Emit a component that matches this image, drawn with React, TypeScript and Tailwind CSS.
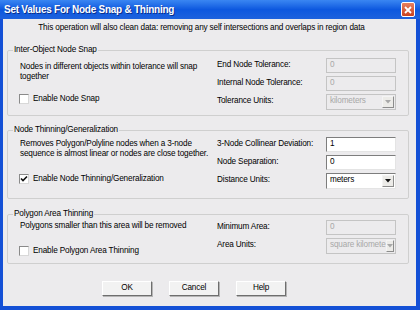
import React from "react";

const font = { fontFamily: '"Liberation Sans", Arial, sans-serif' };

function Checkbox({ checked }: { checked?: boolean }) {
  return (
    <div className="w-[10px] h-[10px] bg-white border border-t-[#8a8a8a] border-l-[#8a8a8a] border-r-[#d8d8d8] border-b-[#d8d8d8] flex items-center justify-center shrink-0">
      {checked && (
        <svg width="8" height="8" viewBox="0 0 8 8">
          <path d="M1 3.5 L3 5.5 L7 1.5" stroke="#111" strokeWidth="1.6" fill="none" />
        </svg>
      )}
    </div>
  );
}

function Input({ value, disabled }: { value: string; disabled?: boolean }) {
  return (
    <div
      className={
        "w-[70px] h-[15px] flex items-center pl-[3px] border " +
        (disabled
          ? "bg-[#ecebed] border-[#c4c4c4] text-[#a8a8a8]"
          : "bg-white border-t-[#7d7d7d] border-l-[#7d7d7d] border-r-[#e4e4e4] border-b-[#e4e4e4] text-black")
      }
    >
      {value}
    </div>
  );
}

function Select({ value, disabled }: { value: string; disabled?: boolean }) {
  return (
    <div
      className={
        "w-[70px] h-[16px] flex items-center border " +
        (disabled
          ? "bg-[#ecebed] border-[#c4c4c4] text-[#a8a8a8]"
          : "bg-white border-t-[#7d7d7d] border-l-[#7d7d7d] border-r-[#e4e4e4] border-b-[#e4e4e4] text-black")
      }
    >
      <div className="flex-1 pl-[3px] whitespace-nowrap">{value}</div>
      <div className="w-[12px] h-[12px] mr-[1px] flex items-center justify-center bg-[#ecebe8] border border-t-[#f4f4f4] border-l-[#f4f4f4] border-r-[#8c8c8c] border-b-[#8c8c8c]">
        <svg width="6" height="4" viewBox="0 0 6 4">
          <path d="M0 0 L6 0 L3 3.5 Z" fill={disabled ? "#a8a8a8" : "#111"} />
        </svg>
      </div>
    </div>
  );
}

function Row({ label, children }: { label: string; children: React.ReactNode }) {
  return (
    <div className="flex items-center h-[15px]">
      <div className="w-[109px]">{label}</div>
      {children}
    </div>
  );
}

function Button({ label }: { label: string }) {
  return (
    <div className="w-[50px] h-[15px] flex items-center justify-center bg-[#f2f2f2] border border-t-[#ffffff] border-l-[#ffffff] border-r-[#6e6e6e] border-b-[#6e6e6e] shadow-[1px_1px_0_#b5b5b5]">
      {label}
    </div>
  );
}

export default function App() {
  return (
    <div
      className="w-[420px] h-[310px] flex flex-col bg-[#1450d6] overflow-hidden text-[8.2px] tracking-[-0.15px] text-black"
      style={font}
    >
      {/* title bar */}
      <div className="h-[19px] shrink-0 flex items-center justify-between bg-gradient-to-b from-[#3a86f2] via-[#0d58df] to-[#1d62dd] pl-[4px] pr-[5px]">
        <div className="text-white font-bold text-[10px] tracking-[-0.25px] [text-shadow:1px_1px_0_#0a2f8a]">
          Set Values For Node Snap &amp; Thinning
        </div>
        <div className="w-[14px] h-[15px] rounded-[2px] border border-white bg-gradient-to-b from-[#e8805e] to-[#c8401e] flex items-center justify-center">
          <svg width="8" height="8" viewBox="0 0 8 8">
            <path d="M1 1 L7 7 M7 1 L1 7" stroke="white" strokeWidth="1.8" />
          </svg>
        </div>
      </div>

      {/* body */}
      <div className="flex-1 ml-[3px] mr-[4px] mb-[4px] bg-[#ecebed] flex flex-col">
        <div className="h-[18px] flex items-center justify-center pr-[16px]">
          This operation will also clean data: removing any self intersections and overlaps in region data
        </div>

        {/* group 1 */}
        <fieldset className="mt-[7px] ml-[4px] w-[402px] h-[72px] border border-[#cfcfcf] rounded-[2px]">
          <legend className="ml-[5px] px-[1px] leading-[12px]">Inter-Object Node Snap</legend>
          <div className="flex">
            <div className="w-[205px] pl-[12px] pt-[6px]">
              <div className="leading-[10px]">
                Nodes in different objects within tolerance will snap
                <br />
                together
              </div>
              <div className="flex items-center gap-[4px] mt-[11px] ml-[-1px]">
                <Checkbox />
                <span>Enable Node Snap</span>
              </div>
            </div>
            <div className="flex flex-col gap-[3px] pt-[2px] pl-[4px]">
              <Row label="End Node Tolerance:">
                <Input value="0" disabled />
              </Row>
              <Row label="Internal Node Tolerance:">
                <Input value="0" disabled />
              </Row>
              <Row label="Tolerance Units:">
                <Select value="kilometers" disabled />
              </Row>
            </div>
          </div>
        </fieldset>

        {/* group 2 */}
        <fieldset className="mt-[8px] ml-[4px] w-[402px] h-[75px] border border-[#cfcfcf] rounded-[2px]">
          <legend className="ml-[5px] px-[1px] leading-[12px]">Node Thinning/Generalization</legend>
          <div className="flex">
            <div className="w-[205px] pl-[12px] pt-[3px]">
              <div className="leading-[10px]">
                Removes Polygon/Polyline nodes when a 3-node
                <br />
                sequence is almost linear or nodes are close together.
              </div>
              <div className="flex items-center gap-[4px] mt-[14px] ml-[-1px]">
                <Checkbox checked />
                <span>Enable Node Thinning/Generalization</span>
              </div>
            </div>
            <div className="flex flex-col gap-[3px] pt-[1px] pl-[4px]">
              <Row label="3-Node Collinear Deviation:">
                <Input value="1" />
              </Row>
              <Row label="Node Separation:">
                <Input value="0" />
              </Row>
              <Row label="Distance Units:">
                <Select value="meters" />
              </Row>
            </div>
          </div>
        </fieldset>

        {/* group 3 */}
        <fieldset className="mt-[9px] ml-[4px] w-[402px] h-[56px] border border-[#cfcfcf] rounded-[2px]">
          <legend className="ml-[5px] px-[1px] leading-[12px]">Polygon Area Thinning</legend>
          <div className="flex">
            <div className="w-[205px] pl-[12px] pt-[1px]">
              <div className="leading-[10px]">Polygons smaller than this area will be removed</div>
              <div className="flex items-center gap-[4px] mt-[14px] ml-[-1px]">
                <Checkbox />
                <span>Enable Polygon Area Thinning</span>
              </div>
            </div>
            <div className="flex flex-col gap-[3px] pt-[0px] pl-[4px]">
              <Row label="Minimum Area:">
                <Input value="0" disabled />
              </Row>
              <Row label="Area Units:">
                <Select value="square kilomete" disabled />
              </Row>
            </div>
          </div>
        </fieldset>

        {/* buttons */}
        <div className="mt-[17px] ml-[99px] flex gap-[17px]">
          <Button label="OK" />
          <Button label="Cancel" />
          <Button label="Help" />
        </div>
      </div>
    </div>
  );
}
